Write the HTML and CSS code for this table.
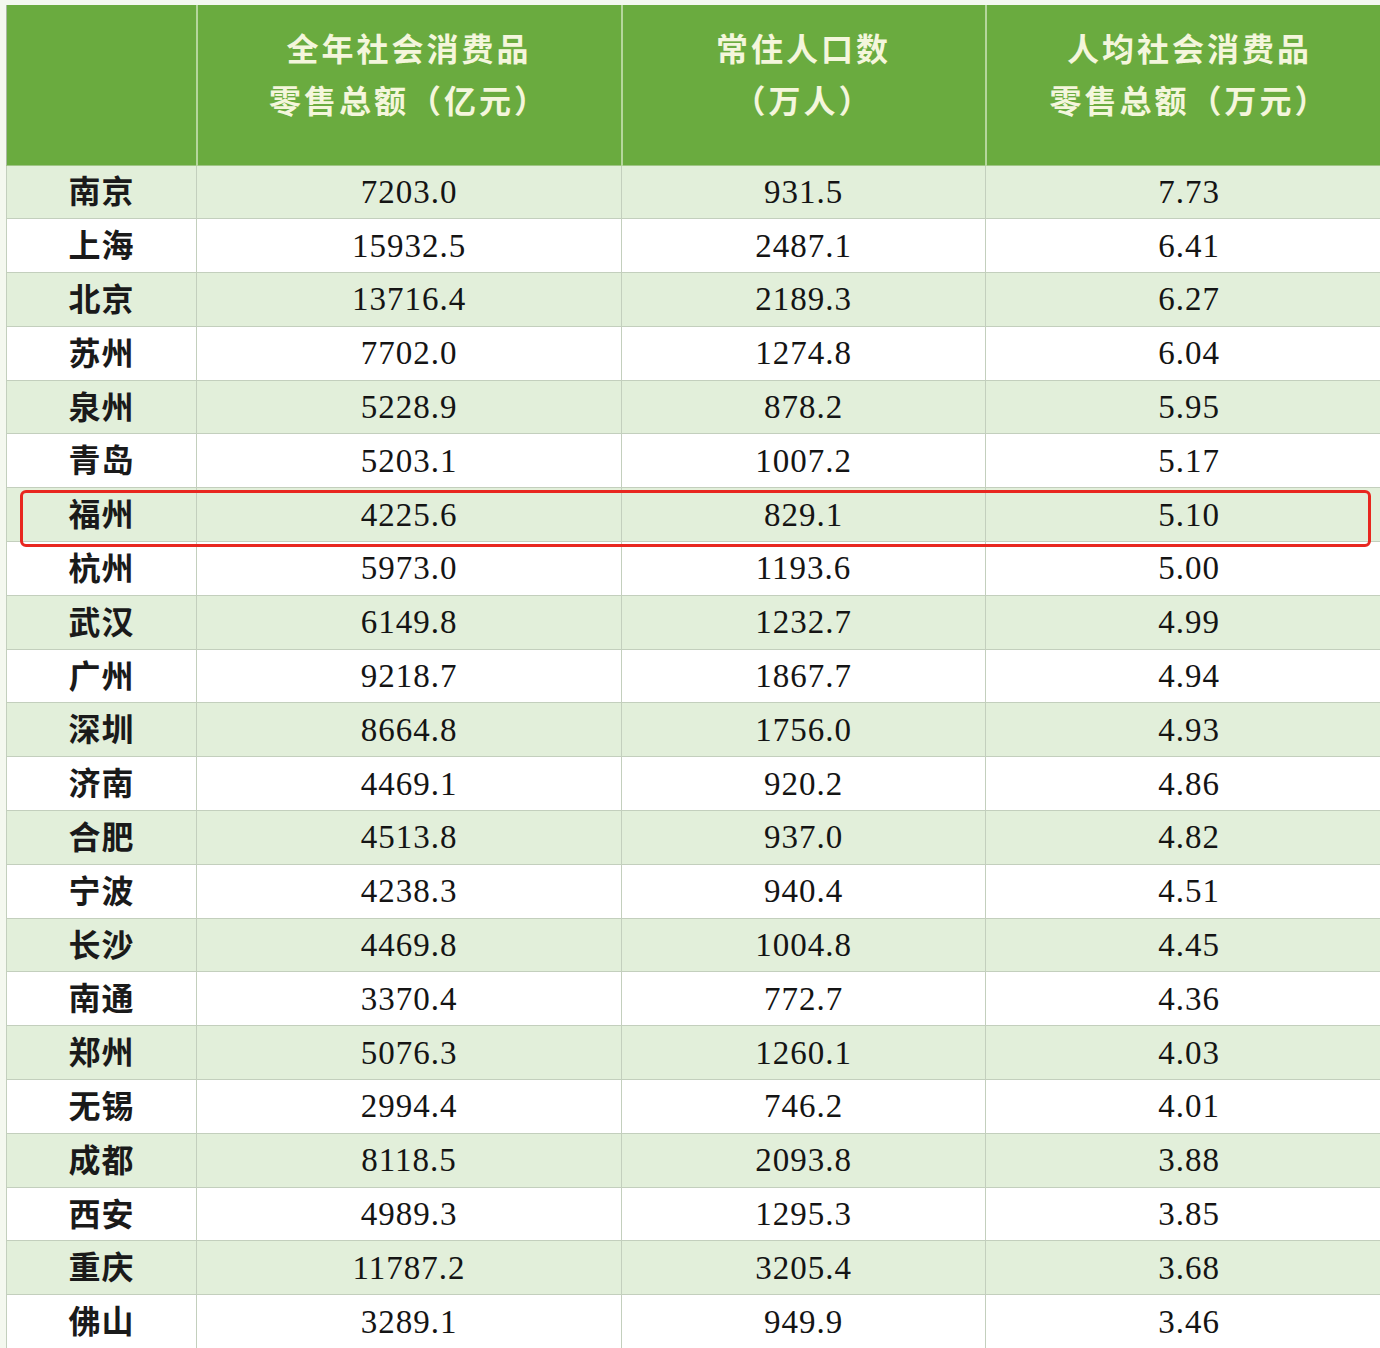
FILE: index.html
```html
<!DOCTYPE html>
<html lang="zh">
<head>
<meta charset="utf-8">
<title>人均社会消费品零售总额</title>
<link rel="stylesheet" href="styles.css">
</head>
<body>
<div class="page">
<table class="data">
<colgroup><col class="c1"><col class="c2"><col class="c3"><col class="c4"></colgroup>
<thead>
<tr><th></th><th>全年社会消费品<br>零售总额（亿元）</th><th>常住人口数<br>（万人）</th><th>人均社会消费品<br>零售总额（万元）</th></tr>
</thead>
<tbody>
<tr><td class="city">南京</td><td>7203.0</td><td>931.5</td><td>7.73</td></tr>
<tr><td class="city">上海</td><td>15932.5</td><td>2487.1</td><td>6.41</td></tr>
<tr><td class="city">北京</td><td>13716.4</td><td>2189.3</td><td>6.27</td></tr>
<tr><td class="city">苏州</td><td>7702.0</td><td>1274.8</td><td>6.04</td></tr>
<tr><td class="city">泉州</td><td>5228.9</td><td>878.2</td><td>5.95</td></tr>
<tr><td class="city">青岛</td><td>5203.1</td><td>1007.2</td><td>5.17</td></tr>
<tr><td class="city">福州</td><td>4225.6</td><td>829.1</td><td>5.10</td></tr>
<tr><td class="city">杭州</td><td>5973.0</td><td>1193.6</td><td>5.00</td></tr>
<tr><td class="city">武汉</td><td>6149.8</td><td>1232.7</td><td>4.99</td></tr>
<tr><td class="city">广州</td><td>9218.7</td><td>1867.7</td><td>4.94</td></tr>
<tr><td class="city">深圳</td><td>8664.8</td><td>1756.0</td><td>4.93</td></tr>
<tr><td class="city">济南</td><td>4469.1</td><td>920.2</td><td>4.86</td></tr>
<tr><td class="city">合肥</td><td>4513.8</td><td>937.0</td><td>4.82</td></tr>
<tr><td class="city">宁波</td><td>4238.3</td><td>940.4</td><td>4.51</td></tr>
<tr><td class="city">长沙</td><td>4469.8</td><td>1004.8</td><td>4.45</td></tr>
<tr><td class="city">南通</td><td>3370.4</td><td>772.7</td><td>4.36</td></tr>
<tr><td class="city">郑州</td><td>5076.3</td><td>1260.1</td><td>4.03</td></tr>
<tr><td class="city">无锡</td><td>2994.4</td><td>746.2</td><td>4.01</td></tr>
<tr><td class="city">成都</td><td>8118.5</td><td>2093.8</td><td>3.88</td></tr>
<tr><td class="city">西安</td><td>4989.3</td><td>1295.3</td><td>3.85</td></tr>
<tr><td class="city">重庆</td><td>11787.2</td><td>3205.4</td><td>3.68</td></tr>
<tr><td class="city">佛山</td><td>3289.1</td><td>949.9</td><td>3.46</td></tr>
</tbody>
</table>
<div class="highlight"></div>
</div>
</body>
</html>
```
FILE: styles.css
```css
html, body {
  margin: 0;
  padding: 0;
  background: #ffffff;
}
body {
  width: 1380px;
  height: 1348px;
  overflow: hidden;
}
.page {
  position: relative;
  padding: 5px 0 0 6px;
  background: #f4f8ef;
}
.data {
  border-collapse: collapse;
  table-layout: fixed;
  width: 1386px;
  background: #ffffff;
}
.c1 { width: 190px; }
.c2 { width: 425px; }
.c3 { width: 364px; }
.c4 { width: 407px; }
.data th {
  height: 160px;
  box-sizing: border-box;
  padding: 0 0 24px;
  background: #6aab3f;
  color: #f4f6dc;
  font-family: "Noto Sans CJK SC", sans-serif;
  font-weight: 700;
  font-size: 32px;
  line-height: 52px;
  letter-spacing: 3px;
  text-align: center;
  vertical-align: middle;
  border-left: 2px solid #b5d69c;
  border-bottom: 1px solid #9fc585;
}
.data th:first-child {
  border-left: 1px solid #a9b9a0;
}
.data td {
  height: 53.8px;
  box-sizing: border-box;
  padding: 0;
  text-align: center;
  vertical-align: middle;
  color: #141414;
  font-family: "Liberation Serif", serif;
  font-size: 33px;
  line-height: 38px;
  letter-spacing: 1px;
  border: 1px solid #c3cfbd;
}
.data td.city {
  padding-bottom: 5px;
  font-family: "Noto Sans CJK SC", sans-serif;
  font-weight: 700;
  font-size: 32px;
  line-height: 38px;
  letter-spacing: 1px;
  color: #1a1a1a;
}
.data tbody tr:nth-child(odd) td {
  background: #e2efda;
}
.data tbody tr:nth-child(even) td {
  background: #ffffff;
}
.highlight {
  position: absolute;
  left: 20px;
  top: 490px;
  width: 1345px;
  height: 51px;
  border: 3px solid #e8271f;
  border-radius: 6px;
}
```
